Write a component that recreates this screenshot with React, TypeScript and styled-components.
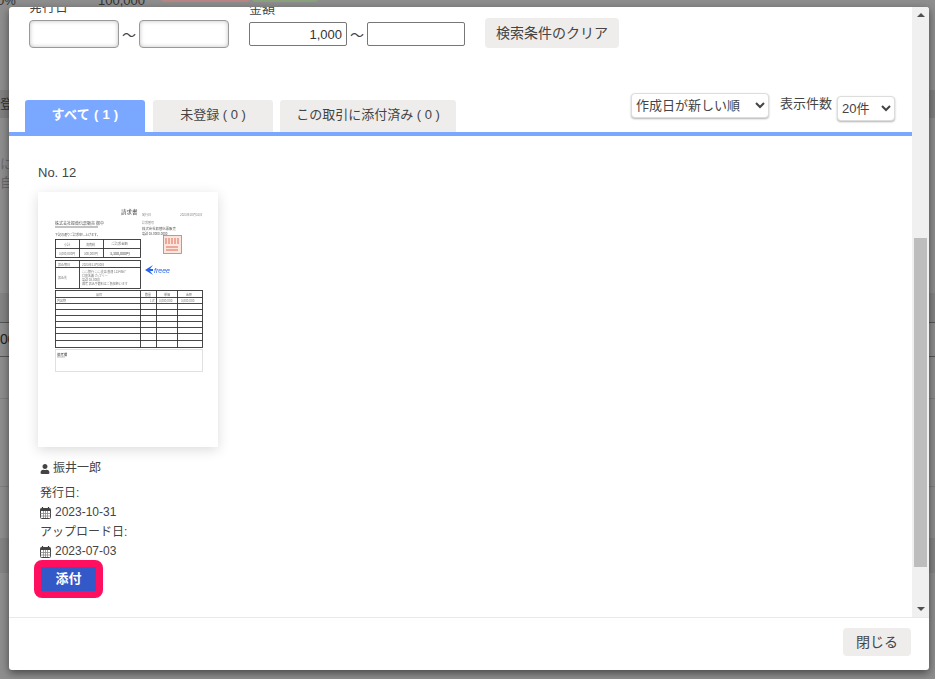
import React from "react";
import styled, { createGlobalStyle } from "styled-components";
import { FaUser } from "react-icons/fa";

const GlobalStyle = createGlobalStyle`
  html, body {
    margin: 0;
    padding: 0;
    overflow: hidden;
  }
  body {
    font-family: "Liberation Sans", "Noto Sans CJK JP", sans-serif;
    color: #333;
  }
`;

const Page = styled.div`
  position: relative;
  width: 935px;
  height: 679px;
  overflow: hidden;
  background: #8e8e8e;
`;

/* page behind the dialog, only its edges show */
const Behind = styled.div`
  display: flex;
  flex-direction: column;
  height: 100%;
  font-size: 14px;
  color: #333;
`;

const BehindTop = styled.div`
  display: flex;
  flex: none;
  height: 97px;
  margin-top: -7px;
  font-size: 13px;
  line-height: 15px;
`;

const BehindPercent = styled.span`
  width: 101px;
  margin-left: -3px;
`;

const BehindAmount = styled.span`
  width: 63px;
`;

const BehindPill = styled.span<{ $color: string; $width: number }>`
  width: ${(p) => p.$width}px;
  height: 9px;
  margin-right: 2px;
  border-radius: 3px;
  background: ${(p) => p.$color};
`;

const BehindBand = styled.div<{ $height: number; $tone?: string; $line?: boolean }>`
  flex: none;
  height: ${(p) => p.$height}px;
  box-sizing: border-box;
  background: ${(p) => p.$tone || "transparent"};
  border-bottom: ${(p) => (p.$line ? "1px solid #7f7f7f" : "none")};
  font-size: 13px;
  line-height: ${(p) => p.$height}px;
  color: #6a6a6a;
`;

const BehindLabel = styled.span`
  color: #333;
`;

const BehindInput = styled.div`
  flex: none;
  height: 33px;
  border-top: 1px solid #555;
  border-bottom: 1px solid #555;
  font-size: 14px;
  line-height: 33px;
  color: #222;
`;

const Dialog = styled.div`
  position: absolute;
  top: 7px;
  left: 9px;
  width: 920px;
  height: 663px;
  display: flex;
  flex-direction: column;
  background: #fff;
  border-radius: 3px;
  box-shadow: 0 3px 9px rgba(0, 0, 0, 0.5);
  overflow: hidden;
`;

const DialogBody = styled.div`
  flex: 1;
  min-height: 0;
  display: flex;
`;

const Content = styled.div`
  width: 903px;
  overflow: hidden;
`;

const Filters = styled.div`
  height: 95px;
  display: flex;
  align-items: flex-start;
  margin-top: -9px;
  padding-left: 20px;
`;

const FilterGroup = styled.div<{ $width: number; $top?: number }>`
  width: ${(p) => p.$width}px;
  margin-top: ${(p) => p.$top || 0}px;
`;

const FilterLabel = styled.div`
  font-size: 13px;
  line-height: 18px;
  height: 22px;
  color: #444;
`;

const FilterRow = styled.div`
  display: flex;
  align-items: center;
  gap: 3px;
`;

const Tilde = styled.span`
  font-size: 14px;
  color: #444;
  width: 14px;
  text-align: center;
`;

const DateInput = styled.input`
  box-sizing: border-box;
  width: 90px;
  height: 28px;
  border: 1px solid #999;
  border-radius: 4px;
  box-shadow: inset 0 0 4px rgba(0, 0, 0, 0.25);
  outline: none;
`;

const AmountInput = styled.input`
  box-sizing: border-box;
  width: 98px;
  height: 24px;
  padding: 0 4px;
  border: 1px solid #777;
  border-radius: 2px;
  font-family: inherit;
  font-size: 13px;
  color: #333;
  text-align: right;
  outline: none;
`;

const GrayButton = styled.button`
  border: none;
  border-radius: 4px;
  background: #eeedec;
  font-family: inherit;
  font-size: 14px;
  color: #444;
`;

const ClearButton = styled(GrayButton)`
  width: 134px;
  height: 30px;
  margin-top: 20px;
  padding: 0 0 2px;
`;

const TabBar = styled.div`
  height: 39px;
  display: flex;
  align-items: flex-end;
  padding: 0 16px;
  border-bottom: 4px solid #7aa7ff;
`;

const Tab = styled.div<{ $active?: boolean; $width: number; $after: number }>`
  width: ${(p) => p.$width}px;
  height: 32px;
  margin-right: ${(p) => p.$after}px;
  border-radius: 3px 3px 0 0;
  background: ${(p) => (p.$active ? "#7aa7ff" : "#eeedec")};
  color: ${(p) => (p.$active ? "#fff" : "#444")};
  font-size: 13px;
  font-weight: ${(p) => (p.$active ? 700 : 400)};
  letter-spacing: ${(p) => (p.$active ? "0.3px" : "0")};
  line-height: 30px;
  text-align: center;
  white-space: pre;
`;

const TabTools = styled.div`
  margin-left: auto;
  align-self: flex-start;
  display: flex;
  align-items: flex-start;
  padding-right: 1px;
`;

const Select = styled.select<{ $width: number; $top: number }>`
  box-sizing: border-box;
  width: ${(p) => p.$width}px;
  height: 25px;
  margin-top: ${(p) => p.$top}px;
  padding: 0;
  border: 1px solid #ddd;
  border-radius: 4px;
  background: #fff;
  box-shadow: 0 1px 2px rgba(0, 0, 0, 0.3);
  font-family: inherit;
  font-size: 13px;
  color: #444;
`;

const CountLabel = styled.span`
  margin: 2px 5px 0 11px;
  font-size: 13px;
  line-height: 18px;
  color: #444;
`;

const Card = styled.div`
  padding: 29px 0 0 29px;
  font-size: 12px;
  color: #444;
`;

const CardNo = styled.div`
  height: 27px;
  font-size: 13px;
  line-height: 16px;
`;

const Thumb = styled.div`
  width: 180px;
  height: 255px;
  margin-bottom: 12px;
  background: #fff;
  box-shadow: 0 3px 12px rgba(0, 0, 0, 0.14);
`;

const ThumbSvg = styled.svg`
  display: block;
  filter: blur(0.5px);
`;

const MetaLine = styled.div<{ $gap?: number }>`
  display: flex;
  align-items: center;
  gap: 3px;
  height: 19.5px;
  margin-bottom: ${(p) => p.$gap || 0}px;
  padding-left: 2px;
  line-height: 19px;
`;

const CalendarSvg = styled.svg`
  display: block;
  margin-right: 1px;
`;

const AttachRing = styled.div`
  width: 55px;
  margin: -2px 0 0 -4px;
  border: 7px solid #ff0f5f;
  border-radius: 8px;
`;

const AttachButton = styled.button`
  display: block;
  width: 55px;
  height: 24px;
  padding: 0 0 2px;
  border: none;
  background: #3358c8;
  color: #fff;
  font-family: inherit;
  font-size: 13px;
  font-weight: 700;
`;

const ScrollTrack = styled.div`
  width: 17px;
  display: flex;
  flex-direction: column;
  align-items: center;
  background: #f0f0f0;
`;

const ScrollArrow = styled.div<{ $down?: boolean }>`
  width: 0;
  height: 0;
  margin: ${(p) => (p.$down ? "0 0 6px" : "6px 0 0")};
  border-left: 4px solid transparent;
  border-right: 4px solid transparent;
  ${(p) => (p.$down ? "border-top: 4px solid #505050;" : "border-bottom: 4px solid #505050;")}
`;

const ScrollThumb = styled.div`
  width: 13px;
  height: 329px;
  margin: 221px 0 auto;
  background: #bdbdbd;
`;

const Footer = styled.div`
  height: 53px;
  box-sizing: border-box;
  display: flex;
  justify-content: flex-end;
  align-items: flex-start;
  padding: 10px 18px 0 0;
  border-top: 1px solid #e9e9e9;
`;

const CloseButton = styled(GrayButton)`
  width: 68px;
  height: 28px;
  padding: 0 0 2px;
`;

const CalendarIcon = () => (
  <CalendarSvg width="11" height="12" viewBox="0 0 11 12">
    <path d="M2.5 0v2M8.5 0v2" stroke="#333" strokeWidth="1.2" />
    <rect x="0.5" y="1.5" width="10" height="10" rx="1" fill="#fff" stroke="#444" />
    <rect x="0.5" y="1.5" width="10" height="2.5" fill="#444" />
    <path d="M0.5 6.5h10M0.5 9h10M3.5 4v7M5.5 4v7M7.5 4v7" stroke="#888" strokeWidth="0.8" />
  </CalendarSvg>
);

const Invoice = () => (
  <ThumbSvg width="180" height="255" viewBox="0 0 180 255">
    <g fontFamily='"Noto Sans CJK JP", sans-serif' fill="#555">
      <text x="83" y="22" fontSize="5.5">請求書</text>
      <text x="17" y="33" fontSize="4">株式会社振替伝票販売 御中</text>
      <line x1="17" y1="35" x2="60" y2="35" stroke="#555" strokeWidth="0.7" />
      <text x="17" y="44" fontSize="3">下記の通りご請求申し上げます。</text>
      <text x="104" y="24" fontSize="3" fill="#888">発行日</text>
      <text x="142" y="24" fontSize="3" fill="#888">2023年10月31日</text>
      <text x="104" y="32" fontSize="3" fill="#888">請求番号</text>
      <text x="104" y="38" fontSize="3.4">株式会社振替伝票販売</text>
      <text x="104" y="43" fontSize="3">電話 03-0000-0000</text>
    </g>
    <g fill="none" stroke="#333" strokeWidth="0.9">
      <rect x="17.5" y="47.5" width="85" height="18" />
      <path d="M17.5 56.5H102.5M41.5 47.5V65.5M65.5 47.5V65.5" />
      <rect x="17.5" y="68.5" width="85" height="28" />
      <path d="M17.5 75.5H102.5M41.5 68.5V96.5" />
      <rect x="17.5" y="98.5" width="147" height="57" />
      <path d="M17.5 105.5H164.5M17.5 111.5H164.5M17.5 117.5H164.5M17.5 123.5H164.5M17.5 129.5H164.5M17.5 135.5H164.5M17.5 141.5H164.5M17.5 148.5H164.5" />
      <path d="M102.5 98.5V155.5M118.5 98.5V155.5M139.5 98.5V155.5" />
    </g>
    <g fontFamily='"Noto Sans CJK JP", sans-serif' fontSize="3" fill="#777">
      <text x="26" y="54">小計</text>
      <text x="48" y="54">消費税</text>
      <text x="73" y="53" fontSize="3.4">ご請求金額</text>
      <text x="21" y="63">3,000,000円</text>
      <text x="46" y="63">300,000円</text>
      <text x="72" y="63" fontSize="3.6" fill="#444">3,300,000円</text>
      <text x="20" y="74">振込期日</text>
      <text x="44" y="74">2023年11月30日</text>
      <text x="20" y="87">振込先</text>
      <text x="44" y="81">○○銀行 ○○支店 普通 1234567</text>
      <text x="44" y="85">口座名義 カ)フリー</text>
      <text x="44" y="89">電話 03-0000</text>
      <text x="44" y="93">備考 振込手数料はご負担願います</text>
      <text x="58" y="104">品目</text>
      <text x="107" y="104">数量</text>
      <text x="126" y="104">単価</text>
      <text x="148" y="104">金額</text>
      <text x="19" y="110">内容物</text>
      <text x="112" y="110">1式</text>
      <text x="121" y="110">3,000,000</text>
      <text x="143" y="110">3,000,000</text>
    </g>
    <rect x="17.5" y="157.5" width="147" height="22" fill="none" stroke="#ddd" strokeWidth="0.9" />
    <text x="19" y="164" fontSize="3.4" fill="#444" fontFamily='"Noto Sans CJK JP", sans-serif'>備考欄</text>
    <line x1="19" y1="165" x2="27" y2="165" stroke="#555" strokeWidth="0.4" />
    <rect x="125.5" y="43.5" width="18" height="18" fill="#fbe6df" stroke="#e0705a" strokeWidth="0.8" />
    <path d="M128 46v6M131 46v6M134 46v6M137 46v6M140 46v6M128 55h12M128 58h12" stroke="#df6a52" strokeWidth="1" fill="none" />
    <path d="M107 78l8-5-3 4h3v2h-3l3 4z" fill="#2864f0" />
    <text x="116" y="81" fontSize="7" fontStyle="italic" fill="#2864f0" fontFamily='"Liberation Sans", sans-serif'>freee</text>
  </ThumbSvg>
);

const App = () => {
  return (
    <Page>
      <GlobalStyle />
      <Behind>
        <BehindTop>
          <BehindPercent>0%</BehindPercent>
          <BehindAmount>100,000</BehindAmount>
          <BehindPill $color="#b98585" $width={89} />
          <BehindPill $color="#8aa27c" $width={66} />
        </BehindTop>
        <BehindBand $height={28} $tone="#808080"><BehindLabel>登</BehindLabel></BehindBand>
        <BehindBand $height={36} />
        <BehindBand $height={19}>に</BehindBand>
        <BehindBand $height={19}>自</BehindBand>
        <BehindBand $height={101} />
        <BehindBand $height={29} $tone="#848484" />
        <BehindInput>000</BehindInput>
        <BehindBand $height={42} $line />
        <BehindBand $height={88} $line />
        <BehindBand $height={51} />
        <BehindBand $height={35} $tone="#848484" />
      </Behind>
      <Dialog>
        <DialogBody>
          <Content>
            <Filters>
              <FilterGroup $width={220}>
                <FilterLabel>発行日</FilterLabel>
                <FilterRow>
                  <DateInput />
                  <Tilde>〜</Tilde>
                  <DateInput />
                </FilterRow>
              </FilterGroup>
              <FilterGroup $width={236} $top={2}>
                <FilterLabel>金額</FilterLabel>
                <FilterRow>
                  <AmountInput defaultValue="1,000" />
                  <Tilde>〜</Tilde>
                  <AmountInput />
                </FilterRow>
              </FilterGroup>
              <ClearButton>検索条件のクリア</ClearButton>
            </Filters>
            <TabBar>
              <Tab $active $width={120} $after={8}>すべて ( 1 )</Tab>
              <Tab $width={120} $after={7}>未登録 ( 0 )</Tab>
              <Tab $width={176} $after={0}>この取引に添付済み ( 0 )</Tab>
              <TabTools>
                <Select $width={138} $top={0} defaultValue="new">
                  <option value="new">作成日が新しい順</option>
                  <option value="old">作成日が古い順</option>
                </Select>
                <CountLabel>表示件数</CountLabel>
                <Select $width={58} $top={3} defaultValue="20">
                  <option value="20">20件</option>
                  <option value="50">50件</option>
                </Select>
              </TabTools>
            </TabBar>
            <Card>
              <CardNo>No. 12</CardNo>
              <Thumb>
                <Invoice />
              </Thumb>
              <MetaLine $gap={5}>
                <FaUser size={10} />
                振井一郎
              </MetaLine>
              <MetaLine>発行日:</MetaLine>
              <MetaLine>
                <CalendarIcon />
                2023-10-31
              </MetaLine>
              <MetaLine>アップロード日:</MetaLine>
              <MetaLine>
                <CalendarIcon />
                2023-07-03
              </MetaLine>
              <AttachRing>
                <AttachButton>添付</AttachButton>
              </AttachRing>
            </Card>
          </Content>
          <ScrollTrack>
            <ScrollArrow />
            <ScrollThumb />
            <ScrollArrow $down />
          </ScrollTrack>
        </DialogBody>
        <Footer>
          <CloseButton>閉じる</CloseButton>
        </Footer>
      </Dialog>
    </Page>
  );
};

export default App;
